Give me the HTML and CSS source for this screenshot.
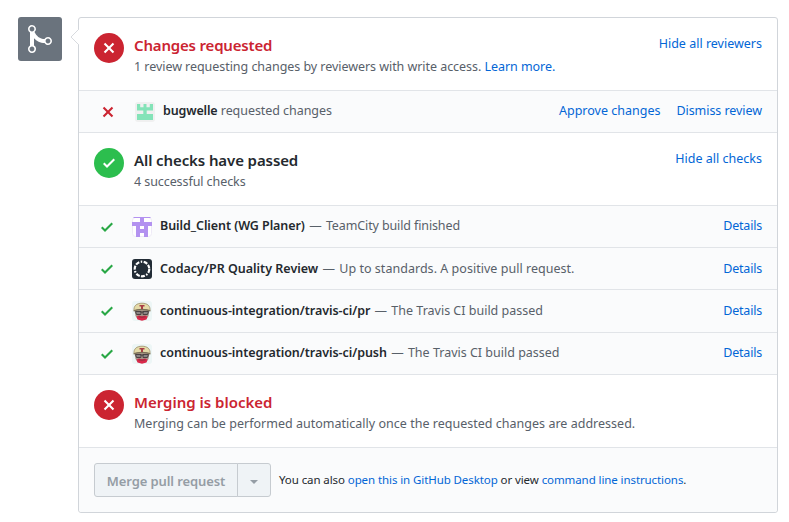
FILE: index.html
```html
<!DOCTYPE html>
<html lang="en">
<head>
<meta charset="utf-8">
<title>Merge status</title>
<link rel="stylesheet" href="styles.css">
</head>
<body>
<svg class="defs" width="0" height="0">
  <symbol id="x" viewBox="0 0 12 16"><path d="M7.48 8l3.75 3.75-1.48 1.48L6 9.48l-3.75 3.75-1.48-1.48L4.52 8 .77 4.25l1.48-1.48L6 6.52l3.75-3.75 1.48 1.48z"/></symbol>
  <symbol id="check" viewBox="0 0 12 16"><path d="M12 5l-8 8-4-4 1.5-1.5L4 10l6.5-6.5z"/></symbol>
  <symbol id="travis" viewBox="0 0 20 20">
    <rect width="20" height="20" rx="3" fill="#edf6f6"/>
    <path d="M2.500 9h15l-1 6-2 3H5.500l-2-3z" fill="#a8988a"/>
    <path d="M4.500 15.500l2.500-1 3 .8 3-.8 2.500 1-1 3-4.500 1.200-4.500-1.200z" fill="#d9284a"/>
    <path d="M6.500 15.800l3.500 .4 3.500-.4" fill="none" stroke="#8e3040"/>
    <path d="M2 9.500C1.500 5 4.500 2.200 10 2.200s8.500 2.800 8 7.300L14 8.500H6z" fill="#e4dba8" stroke="#9a8d68" stroke-width=".8"/>
    <path d="M1.500 10C6 7.800 14 7.800 18.500 10" fill="none" stroke="#7b7158" stroke-width="1.200"/>
    <path d="M7.500 4h5v1.500h-1.500v2.500H9V5.500H7.500z" fill="#a83f45"/>
    <path d="M3.500 10.500h5.500v3H4.500zM11 10.500h5.500l-1 3H11z" fill="#8b8583" stroke="#4a4344"/>
    <path d="M8.500 11h3" stroke="#3c3535"/>
  </symbol>
</svg>
<main class="merge">
  <div class="badge">
    <svg width="24" height="32" viewBox="0 0 12 16"><path fill="#fff" d="M10 7c-.73 0-1.380.41-1.730 1.020V8C7.220 7.980 6 7.640 5.140 6.980c-.75-.58-1.500-1.610-1.890-2.440A1.993 1.993 0 0 0 2 .99C.89.99 0 1.890 0 3a2 2 0 0 0 1 1.720v6.560c-.59.35-1 .99-1 1.720 0 1.110.89 2 2 2a1.993 1.993 0 0 0 1-3.720V7.670c.67.700 1.440 1.270 2.300 1.690.86.42 2.030.63 2.970.64v-.02c.36.61 1 1.020 1.730 1.020 1.110 0 2-.89 2-2 0-1.110-.89-2-2-2zm-6.800 6c0 .66-.55 1.200-1.200 1.200-.65 0-1.200-.55-1.200-1.200 0-.65.55-1.200 1.200-1.200.65 0 1.200.55 1.200 1.200zM2 4.200C1.340 4.200.8 3.650.8 3c0-.65.55-1.200 1.200-1.200.65 0 1.200.55 1.200 1.200 0 .65-.55 1.200-1.200 1.200zm8 6c-.66 0-1.200-.55-1.200-1.200 0-.65.55-1.200 1.200-1.200.65 0 1.200.55 1.200 1.200 0 .65-.55 1.200-1.200 1.200z"/></svg>
  </div>
  <div class="card">
    <svg class="caret" width="9" height="16" viewBox="0 0 9 16"><path d="M9 0L1 8l8 8" fill="#fff" stroke="#d8dbdf"/></svg>
    <section class="section">
      <span class="status red"><svg width="12" height="16"><use href="#x"/></svg></span>
      <div class="text"><h2 class="title danger">Changes requested</h2><p class="sub s-review">1 review requesting changes by reviewers with write access. <a>Learn more.</a></p></div>
      <a class="toggle">Hide all reviewers</a>
    </section>
    <div class="row review">
      <svg class="mark bad" width="12" height="16"><use href="#x"/></svg>
      <svg class="avatar" width="20" height="20" viewBox="0 0 20 20"><rect width="20" height="20" rx="3" fill="#f0f0f0"/><path fill="#84e3b8" d="M2 2h3.200v3.300h3.300V2h3v3.300h3.300V2H18v6.500h-6.300V12H18v6H2v-6h6.300V8.500H2z"/></svg>
      <p class="label"><b class="b-bug">bugwelle</b> <span class="d-bug">requested changes</span></p>
      <a class="link">Approve changes</a><a class="link l-dismiss">Dismiss review</a>
    </div>
    <section class="section">
      <span class="status green"><svg width="12" height="16"><use href="#check"/></svg></span>
      <div class="text"><h2 class="title t-checks">All checks have passed</h2><p class="sub s-checks">4 successful checks</p></div>
      <a class="toggle">Hide all checks</a>
    </section>
    <div class="row high">
      <svg class="mark good" width="12" height="16"><use href="#check"/></svg>
      <svg class="avatar" width="20" height="20" viewBox="0 0 20 20"><rect x=".5" y=".5" width="19" height="19" rx="3" fill="#fff" stroke="#eeeaf7"/><path fill="#b392f0" d="M2 0h16l1 1h-7v4h8v4h-4v11h-4v-4H8v4H4V9H0V5h8V1H1zM8 9v3h4V9z"/></svg>
      <p class="label"><b class="b-build">Build_Client (WG Planer)</b> <span class="dash">—</span> <span class="d-build">TeamCity build finished</span></p>
      <a class="link l-details">Details</a>
    </div>
    <div class="row">
      <svg class="mark good" width="12" height="16"><use href="#check"/></svg>
      <svg class="avatar" width="20" height="20" viewBox="0 0 20 20"><rect width="20" height="20" rx="3" fill="#222c36"/><circle cx="10" cy="10" r="7.300" fill="none" stroke="#fff" stroke-width="2.200" stroke-dasharray="4 1.500 1.500 1.500 4 1.200"/></svg>
      <p class="label"><b>Codacy/PR Quality Review</b> <span class="dash">—</span> <span class="d-codacy">Up to standards. A positive pull request.</span></p>
      <a class="link l-details">Details</a>
    </div>
    <div class="row tall">
      <svg class="mark good" width="12" height="16"><use href="#check"/></svg>
      <svg class="avatar" width="20" height="20"><use href="#travis"/></svg>
      <p class="label"><b class="b-travis">continuous-integration/travis-ci/pr</b> <span class="dash">—</span> <span class="d-travis">The Travis CI build passed</span></p>
      <a class="link l-details">Details</a>
    </div>
    <div class="row high">
      <svg class="mark good" width="12" height="16"><use href="#check"/></svg>
      <svg class="avatar" width="20" height="20"><use href="#travis"/></svg>
      <p class="label"><b class="b-travis">continuous-integration/travis-ci/push</b> <span class="dash">—</span> <span class="d-travis">The Travis CI build passed</span></p>
      <a class="link l-details">Details</a>
    </div>
    <section class="section">
      <span class="status red"><svg width="12" height="16"><use href="#x"/></svg></span>
      <div class="text"><h2 class="title danger t-merge">Merging is blocked</h2><p class="sub s-merge">Merging can be performed automatically once the requested changes are addressed.</p></div>
    </section>
    <footer class="actions">
      <div class="group"><button class="btn" disabled>Merge pull request</button><button class="btn drop" disabled aria-label="Merge options"><i class="arrow"></i></button></div>
      <p class="hint">You can also <a>open this in GitHub Desktop</a> or view <a>command line instructions</a>.</p>
    </footer>
  </div>
</main>
</body>
</html>
```
FILE: styles.css
```css
* { box-sizing: border-box; }
body { margin: 0; background: #fff; color: #24292e; font: 12.5px/20px "Noto Sans", "Open Sans", sans-serif; }
h2, p { margin: 0; }
a { color: #0366d6; text-decoration: none; }
.defs { position: absolute; }
.merge { display: flex; align-items: flex-start; gap: 16px; padding: 17px 11px 0 18px; }
.badge { width: 44px; height: 44px; border-radius: 3px; background: #6a737d; display: flex; align-items: center; justify-content: center; }
.badge svg { margin-right: 1px; }
.card { position: relative; width: 700px; height: 496px; border: 1px solid #d1d5da; border-radius: 3px; }
.caret { position: absolute; left: -9px; top: 11px; }
.section { display: flex; height: 73px; padding: 15px 15px 0; border-bottom: 1px solid #e1e4e8; }
.status { width: 30px; height: 30px; border-radius: 50%; display: flex; align-items: center; justify-content: center; fill: #fff; margin-right: 10px; }
.red { background: #cb2431; }
.green { background: #2cbe4e; }
.text { flex: 1; padding-top: 1px; }
.title { font-size: 15px; line-height: 23px; font-weight: 600; letter-spacing: -.18px; white-space: nowrap; }
.t-checks { letter-spacing: -.1px; }
.t-merge { letter-spacing: 0; }
.danger { color: #cb2431; }
.sub { color: #586069; line-height: 20px; white-space: nowrap; }
.s-review { letter-spacing: -.05px; }
.s-checks { letter-spacing: -.08px; }
.s-merge { letter-spacing: .015px; }
.toggle { margin-top: 1px; white-space: nowrap; }
.row { display: flex; align-items: center; height: 42px; padding: 0 15px 0 22px; background: #fafbfc; border-bottom: 1px solid #e1e4e8; }
.tall { height: 43px; }
.mark { margin-right: 19px; }
.good { fill: #28a745; }
.bad { fill: #cb2431; }
.avatar { margin-right: 8px; }
.review { padding-left: 23px; }
.review .mark { margin-right: 21px; }
.label { flex: 1; color: #586069; white-space: nowrap; }
.label b { color: #24292e; font-weight: 600; }
.link { margin-left: 16px; white-space: nowrap; }
.review .label, .high .label, .review .link, .high .link { margin-top: -2px; }
.b-bug { letter-spacing: -.15px; }
.label .d-bug { letter-spacing: -.06px; }
.dash { margin: 0 1px; }
.b-build { letter-spacing: -.07px; }
.d-build { letter-spacing: -.12px; }
.d-codacy { letter-spacing: .03px; }
.b-travis { letter-spacing: -.05px; }
.l-dismiss { letter-spacing: -.06px; }
.l-details { letter-spacing: -.2px; }
.actions { display: flex; align-items: center; height: 64px; padding: 0 15px; background: #fafbfc; border-radius: 0 0 3px 3px; }
.group { display: flex; }
.btn { height: 34px; width: 144px; padding: 2px 0 0; border: 1px solid #c6cbd0; border-radius: 3px 0 0 3px; background: #eff3f6; color: #959da5; font: 600 13px/20px "Noto Sans", sans-serif; letter-spacing: -.1px; white-space: nowrap; }
.drop { width: 34px; margin-left: -1px; border-radius: 0 3px 3px 0; display: flex; align-items: center; justify-content: center; }
.arrow { border: 4px solid transparent; border-top-color: #959da5; border-bottom: 0; margin-top: 2px; }
.hint { font-size: 11.5px; letter-spacing: -.09px; margin-left: 8px; white-space: nowrap; }
```
